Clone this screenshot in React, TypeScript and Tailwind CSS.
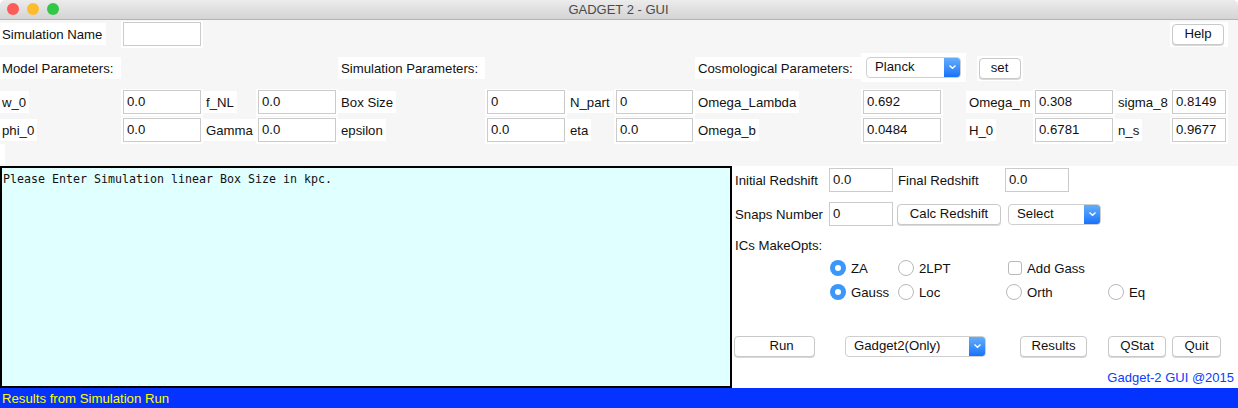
const font = "font-['Liberation_Sans',Arial,sans-serif]";

function Label({ text, first = false, className = "" }: { text: string; first?: boolean; className?: string }) {
  return (
    <div className={`flex h-[22px] items-center self-center justify-self-start whitespace-nowrap bg-white pr-[3px] pt-[2px] text-[13.2px] leading-none text-[#111] ${first ? "pl-[2px]" : "pl-[3px]"} ${className}`}>
      {text}
    </div>
  );
}

function Field({ value = "", className = "" }: { value?: string; className?: string }) {
  return (
    <div className={`flex h-[27px] items-center self-center bg-white p-[2px] ${className}`}>
      <div className="flex h-[24px] w-full items-center border border-[#cbcbcb] bg-white pl-[3px] text-[13.2px] text-[#111]">
        {value}
      </div>
    </div>
  );
}

function Btn({ text, className = "" }: { text: string; className?: string }) {
  return (
    <div className={`flex h-[21px] items-center justify-center rounded-[4px] border border-[#c9c9c9] bg-white text-[13.2px] leading-none text-[#111] shadow-[0_1px_0_#d8d8d8] ${className}`}>
      {text}
    </div>
  );
}

function Dropdown({ text, className = "" }: { text: string; className?: string }) {
  return (
    <div className={`flex h-[21px] items-stretch overflow-hidden rounded-[4px] border border-[#cfcfcf] bg-white text-[13.2px] leading-none text-[#111] ${className}`}>
      <div className="flex flex-1 items-center pl-[8px]">{text}</div>
      <div className="-my-px -mr-px flex w-[17px] items-center justify-center bg-gradient-to-b from-[#67b0fb] to-[#0f6ffa]">
        <svg width="9" height="6" viewBox="0 0 9 6" fill="none">
          <path d="M1.5 1.5 4.5 4.3 7.5 1.5" stroke="white" strokeWidth="1.4" />
        </svg>
      </div>
    </div>
  );
}

function Radio({ text, on = false, className = "" }: { text: string; on?: boolean; className?: string }) {
  return (
    <div className={`flex items-center text-[13.2px] leading-none text-[#111] ${className}`}>
      {on ? (
        <span className="flex h-[16px] w-[16px] shrink-0 items-center justify-center rounded-full bg-[#3c97fb]">
          <span className="h-[6px] w-[6px] rounded-full bg-white" />
        </span>
      ) : (
        <span className="h-[16px] w-[16px] shrink-0 rounded-full border border-[#b9b9b9] bg-white" />
      )}
      <span className="ml-[5px] pt-[1px]">{text}</span>
    </div>
  );
}

export default function App() {
  return (
    <div className={`flex h-[408px] w-[1238px] flex-col overflow-hidden bg-white ${font}`}>
      {/* Title bar */}
      <div className="relative flex h-[20px] shrink-0 items-center justify-center rounded-t-[5px] border-b border-[#b4b4b4] bg-gradient-to-b from-[#ececec] to-[#d4d4d4] text-[13px] text-[#4b4b4b]">
        <div className="absolute left-[7px] top-[3px] flex gap-[8px]">
          <span className="h-[12px] w-[12px] rounded-full bg-[#fc5b57]" />
          <span className="h-[12px] w-[12px] rounded-full bg-[#fdbc2e]" />
          <span className="h-[12px] w-[12px] rounded-full bg-[#33c748]" />
        </div>
        <span className="-ml-px">GADGET 2 - GUI</span>
      </div>

      {/* Parameters */}
      <div className="h-[146px] shrink-0 bg-[#f6f6f6]">
        <div className="grid grid-cols-[121px_82px_53px_82px_147px_82px_47px_81px_166px_82px_23px_67px_82px_55px_58px] grid-rows-[28px_40px_28px_28px]">
          <Label first text="Simulation Name" className="col-start-1 row-start-1 w-[106px]" />
          <Field className="col-start-2 row-start-1" />
          <div className="col-start-15 row-start-1 self-center bg-white p-[2px]">
            <Btn text="Help" className="w-[52px]" />
          </div>

          <Label first text="Model Parameters:" className="col-start-1 row-start-2 w-[121px]" />
          <Label text="Simulation Parameters:" className="col-start-5 row-start-2 w-[147px]" />
          <Label text="Cosmological Parameters:" className="col-start-9 row-start-2 w-[166px]" />
          <div className="col-span-2 col-start-10 row-start-2 mt-[5px] flex h-[29px] items-center self-start bg-white px-[5px] pb-[1px]">
            <Dropdown text="Planck" className="w-[96px]" />
          </div>
          <div className="col-start-12 row-start-2 self-center justify-self-center bg-white p-[2px]">
            <Btn text="set" className="w-[42px]" />
          </div>

          <Label first text="w_0" className="col-start-1 row-start-3" />
          <Field value="0.0" className="col-start-2 row-start-3" />
          <Label text="f_NL" className="col-start-3 row-start-3" />
          <Field value="0.0" className="col-start-4 row-start-3" />
          <Label text="Box Size" className="col-start-5 row-start-3" />
          <Field value="0" className="col-start-6 row-start-3" />
          <Label text="N_part" className="col-start-7 row-start-3" />
          <Field value="0" className="col-start-8 row-start-3" />
          <Label text="Omega_Lambda" className="col-start-9 row-start-3" />
          <Field value="0.692" className="col-start-10 row-start-3" />
          <Label text="Omega_m" className="col-start-12 row-start-3" />
          <Field value="0.308" className="col-start-13 row-start-3" />
          <Label text="sigma_8" className="col-start-14 row-start-3" />
          <Field value="0.8149" className="col-start-15 row-start-3" />

          <Label first text="phi_0" className="col-start-1 row-start-4" />
          <Field value="0.0" className="col-start-2 row-start-4" />
          <Label text="Gamma" className="col-start-3 row-start-4" />
          <Field value="0.0" className="col-start-4 row-start-4" />
          <Label text="epsilon" className="col-start-5 row-start-4" />
          <Field value="0.0" className="col-start-6 row-start-4" />
          <Label text="eta" className="col-start-7 row-start-4" />
          <Field value="0.0" className="col-start-8 row-start-4" />
          <Label text="Omega_b" className="col-start-9 row-start-4" />
          <Field value="0.0484" className="col-start-10 row-start-4" />
          <Label text="H_0" className="col-start-12 row-start-4" />
          <Field value="0.6781" className="col-start-13 row-start-4" />
          <Label text="n_s" className="col-start-14 row-start-4" />
          <Field value="0.9677" className="col-start-15 row-start-4" />
        </div>
        <div className="h-[20px] w-[5px] bg-white" />
      </div>

      <div className="flex min-h-0 flex-1">
        {/* Log output */}
        <div className="h-[222px] w-[732px] shrink-0 border-2 border-black bg-[#e0ffff] pl-px pt-[3px] font-['DejaVu_Sans_Mono',monospace] text-[11.63px] leading-[16px] text-[#111]">
          Please Enter Simulation linear Box Size in kpc.
        </div>

        {/* Run controls */}
        <div className="flex flex-1 flex-col pl-[3px] text-[13.2px] text-[#111]">
          <div className="mt-[2px] flex h-[24px] items-center">
            <span className="w-[94px] pt-[1px]">Initial Redshift</span>
            <Field value="0.0" className="-ml-[2px] w-[68px]" />
            <span className="ml-[3px] w-[107px] pt-[1px]">Final Redshift</span>
            <Field value="0.0" className="-ml-[2px] w-[68px]" />
          </div>
          <div className="mt-[10px] flex h-[24px] items-center">
            <span className="w-[94px] pt-[1px]">Snaps Number</span>
            <Field value="0" className="-ml-[2px] w-[68px]" />
            <Btn text="Calc Redshift" className="ml-[2px] w-[104px]" />
            <Dropdown text="Select" className="ml-[7px] w-[93px]" />
          </div>
          <div className="mt-[12px] leading-[16px]">ICs MakeOpts:</div>
          <div className="ml-[95px] mt-[6px] flex h-[16px] items-center">
            <Radio text="ZA" on className="w-[68px]" />
            <Radio text="2LPT" className="w-[110px]" />
            <span className="h-[14px] w-[14px] rounded-[3px] border border-[#b9b9b9] bg-white" />
            <span className="ml-[5px] pt-[1px]">Add Gass</span>
          </div>
          <div className="ml-[95px] mt-[8px] flex h-[16px] items-center">
            <Radio text="Gauss" on className="w-[68px]" />
            <Radio text="Loc" className="w-[108px]" />
            <Radio text="Orth" className="w-[102px]" />
            <Radio text="Eq" />
          </div>
          <div className="mt-[35px] flex h-[22px] items-center">
            <Btn text="Run" className="-ml-px w-[81px] pl-[14px]" />
            <Dropdown text="Gadget2(Only)" className="ml-[30px] w-[141px]" />
            <Btn text="Results" className="ml-[34px] w-[67px]" />
            <Btn text="QStat" className="ml-[21px] w-[58px]" />
            <Btn text="Quit" className="ml-[6px] w-[49px]" />
          </div>
          <div className="mt-[13px] pr-[4px] text-right text-[13px] leading-[16px] text-[#0a3cff]">Gadget-2 GUI @2015</div>
        </div>
      </div>

      {/* Status bar */}
      <div className="flex h-[20px] shrink-0 items-center bg-[#0433ff] pl-[2px] pt-[2px] text-[13.2px] text-[#fffb00]">
        Results from Simulation Run
      </div>
    </div>
  );
}
